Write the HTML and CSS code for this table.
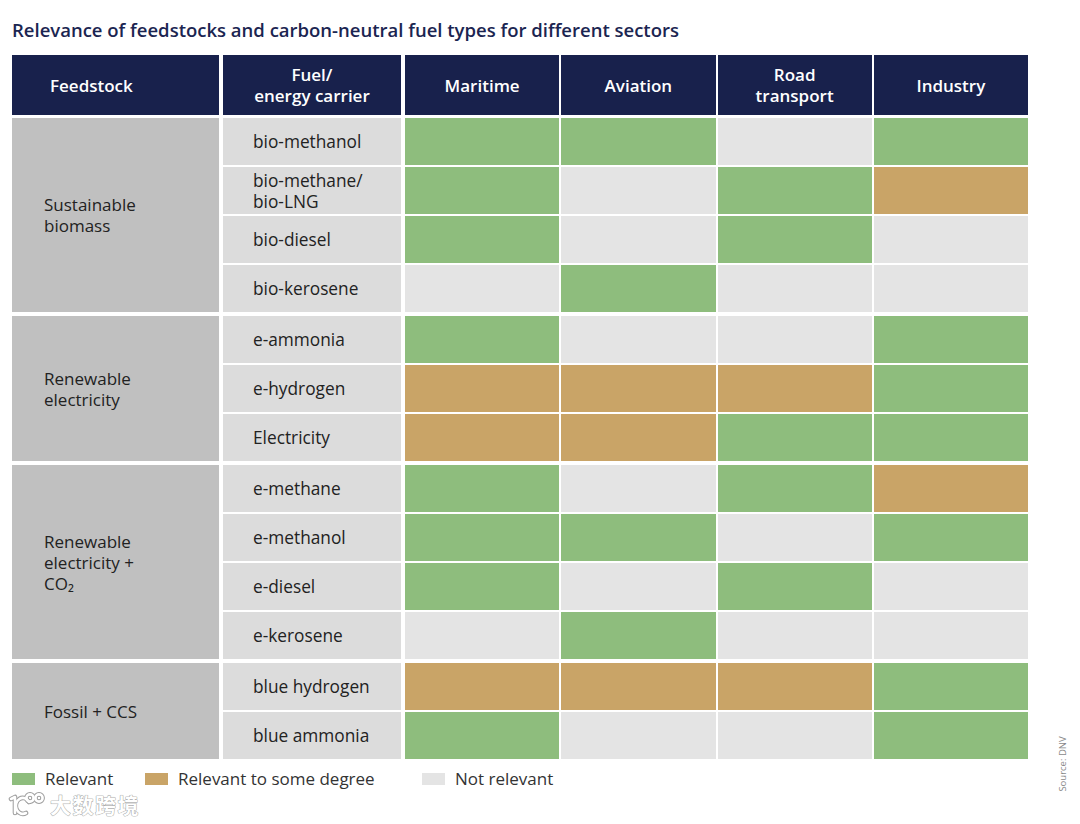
FILE: index.html
```html
<!DOCTYPE html>
<html lang="en">
<head>
<meta charset="utf-8">
<title>Relevance of feedstocks and carbon-neutral fuel types</title>
<link rel="stylesheet" href="styles.css">
</head>
<body>
<div class="page">
  <h1 class="title">Relevance of feedstocks and carbon-neutral fuel types for different sectors</h1>

  <div class="table">
    <div class="row-grid head">
      <div class="hcell hcell-left col-fixed">Feedstock</div>
      <div class="hcell col-fixed">Fuel/<br>energy carrier</div>
      <div class="hcell">Maritime</div>
      <div class="hcell">Aviation</div>
      <div class="hcell">Road<br>transport</div>
      <div class="hcell">Industry</div>
    </div>

    <div class="row-grid group g4">
      <div class="feed col-fixed">Sustainable<br>biomass</div>
      <div class="fuel col-fixed">bio-methanol</div>
      <div class="c g"></div><div class="c g"></div><div class="c n"></div><div class="c g"></div>
      <div class="fuel col-fixed">bio-methane/<br>bio-LNG</div>
      <div class="c g"></div><div class="c n"></div><div class="c g"></div><div class="c t"></div>
      <div class="fuel col-fixed">bio-diesel</div>
      <div class="c g"></div><div class="c n"></div><div class="c g"></div><div class="c n"></div>
      <div class="fuel col-fixed">bio-kerosene</div>
      <div class="c n"></div><div class="c g"></div><div class="c n"></div><div class="c n"></div>
    </div>

    <div class="row-grid group g3">
      <div class="feed col-fixed">Renewable<br>electricity</div>
      <div class="fuel col-fixed">e-ammonia</div>
      <div class="c g"></div><div class="c n"></div><div class="c n"></div><div class="c g"></div>
      <div class="fuel col-fixed">e-hydrogen</div>
      <div class="c t"></div><div class="c t"></div><div class="c t"></div><div class="c g"></div>
      <div class="fuel col-fixed">Electricity</div>
      <div class="c t"></div><div class="c t"></div><div class="c g"></div><div class="c g"></div>
    </div>

    <div class="row-grid group g4">
      <div class="feed col-fixed">Renewable<br>electricity +<br>CO₂</div>
      <div class="fuel col-fixed">e-methane</div>
      <div class="c g"></div><div class="c n"></div><div class="c g"></div><div class="c t"></div>
      <div class="fuel col-fixed">e-methanol</div>
      <div class="c g"></div><div class="c g"></div><div class="c n"></div><div class="c g"></div>
      <div class="fuel col-fixed">e-diesel</div>
      <div class="c g"></div><div class="c n"></div><div class="c g"></div><div class="c n"></div>
      <div class="fuel col-fixed">e-kerosene</div>
      <div class="c n"></div><div class="c g"></div><div class="c n"></div><div class="c n"></div>
    </div>

    <div class="row-grid group g2">
      <div class="feed col-fixed">Fossil + CCS</div>
      <div class="fuel col-fixed">blue hydrogen</div>
      <div class="c t"></div><div class="c t"></div><div class="c t"></div><div class="c g"></div>
      <div class="fuel col-fixed">blue ammonia</div>
      <div class="c g"></div><div class="c n"></div><div class="c n"></div><div class="c g"></div>
    </div>
  </div>

  <div class="legend">
    <div class="legend-item item-1"><span class="swatch g"></span>Relevant</div>
    <div class="legend-item item-2"><span class="swatch t"></span>Relevant to some degree</div>
    <div class="legend-item item-3"><span class="swatch n"></span>Not relevant</div>
  </div>

  <div class="source">Source: DNV</div>

  <div class="watermark">
    <svg class="wm-logo" width="40" height="26" viewBox="0 0 40 26">
      <g fill="none" stroke="#9c9c9c" stroke-width="4.6" stroke-linecap="round" stroke-linejoin="round">
        <path d="M3 8 L7 6 L7 22"/>
        <path d="M21 11 A7 8 0 1 0 18 22"/>
        <circle cx="22" cy="7" r="3.6"/>
        <circle cx="31" cy="7" r="3.6"/>
      </g>
      <g fill="none" stroke="#ffffff" stroke-width="2.6" stroke-linecap="round" stroke-linejoin="round">
        <path d="M3 8 L7 6 L7 22"/>
        <path d="M21 11 A7 8 0 1 0 18 22"/>
        <circle cx="22" cy="7" r="3.6"/>
        <circle cx="31" cy="7" r="3.6"/>
      </g>
    </svg>
    <span class="wm-text">大数跨境</span>
  </div>
</div>
</body>
</html>
```

FILE: styles.css
```css
html, body {
  margin: 0;
  padding: 0;
  background: #ffffff;
}

.page {
  position: relative;
  width: 1080px;
  height: 824px;
  padding: 18px 0 0 12px;
  box-sizing: border-box;
  font-family: "Open Sans", "Lato", "Noto Sans", sans-serif;
  color: #222222;
}

.title {
  margin: 0;
  font-size: 18.5px;
  line-height: 23px;
  font-weight: 600;
  color: #1b2551;
}

.table {
  width: 1016px;
  margin-top: 14px;
}

.row-grid {
  display: grid;
  grid-template-columns: 209px 180px 1fr 1fr 1fr 1fr;
  column-gap: 2px;
}

.col-fixed {
  margin-right: 2px;
}

.head {
  height: 60px;
  margin-bottom: 3px;
}

.hcell {
  background: #18214c;
  color: #ffffff;
  font-weight: 600;
  font-size: 17px;
  line-height: 21px;
  display: flex;
  align-items: center;
  justify-content: center;
  text-align: center;
}

.hcell-left {
  justify-content: flex-start;
  padding-left: 38px;
  text-align: left;
}

.group {
  row-gap: 2px;
  margin-bottom: 4px;
}

.g2 { grid-template-rows: repeat(2, 47px); }
.g3 { grid-template-rows: repeat(3, 47px); }
.g4 { grid-template-rows: repeat(4, 47px); }

.g2 .feed { grid-row: 1 / span 2; }
.g3 .feed { grid-row: 1 / span 3; }
.g4 .feed { grid-row: 1 / span 4; }

.feed {
  grid-column: 1;
  background: #c0c0c0;
  display: flex;
  align-items: center;
  padding-left: 32px;
  font-size: 17px;
  line-height: 21px;
  color: #222222;
}

.fuel {
  grid-column: 2;
  background: #dcdcdc;
  display: flex;
  align-items: center;
  padding-left: 30px;
  font-size: 17.3px;
  line-height: 21px;
  color: #222222;
}

.c.g, .swatch.g { background: #8ebd7d; }
.c.t, .swatch.t { background: #c9a467; }
.c.n, .swatch.n { background: #e4e4e4; }

.legend {
  display: flex;
  align-items: center;
  margin-top: 10px;
  height: 20px;
  font-size: 17px;
  line-height: 20px;
  color: #333333;
}

.legend-item {
  display: flex;
  align-items: center;
}

.swatch {
  display: inline-block;
  width: 23px;
  height: 12px;
  margin-right: 10px;
}

.item-1 { width: 133px; }
.item-2 { width: 277px; }

.source {
  position: absolute;
  left: 1062px;
  top: 764px;
  transform: translate(-50%, -50%) rotate(-90deg);
  font-size: 9.5px;
  color: #8a8a8a;
  white-space: nowrap;
}

.watermark {
  position: absolute;
  left: 8px;
  top: 792px;
  display: flex;
  align-items: center;
  gap: 2px;
  height: 24px;
}

.wm-text {
  font-family: "Noto Sans CJK SC", sans-serif;
  font-weight: 700;
  font-size: 21px;
  line-height: 22px;
  color: #ffffff;
  letter-spacing: 1.5px;
  -webkit-text-stroke: 0.6px #9a9a9a;
  paint-order: stroke fill;
  text-shadow: 0 0 1px #9a9a9a;
}
```
